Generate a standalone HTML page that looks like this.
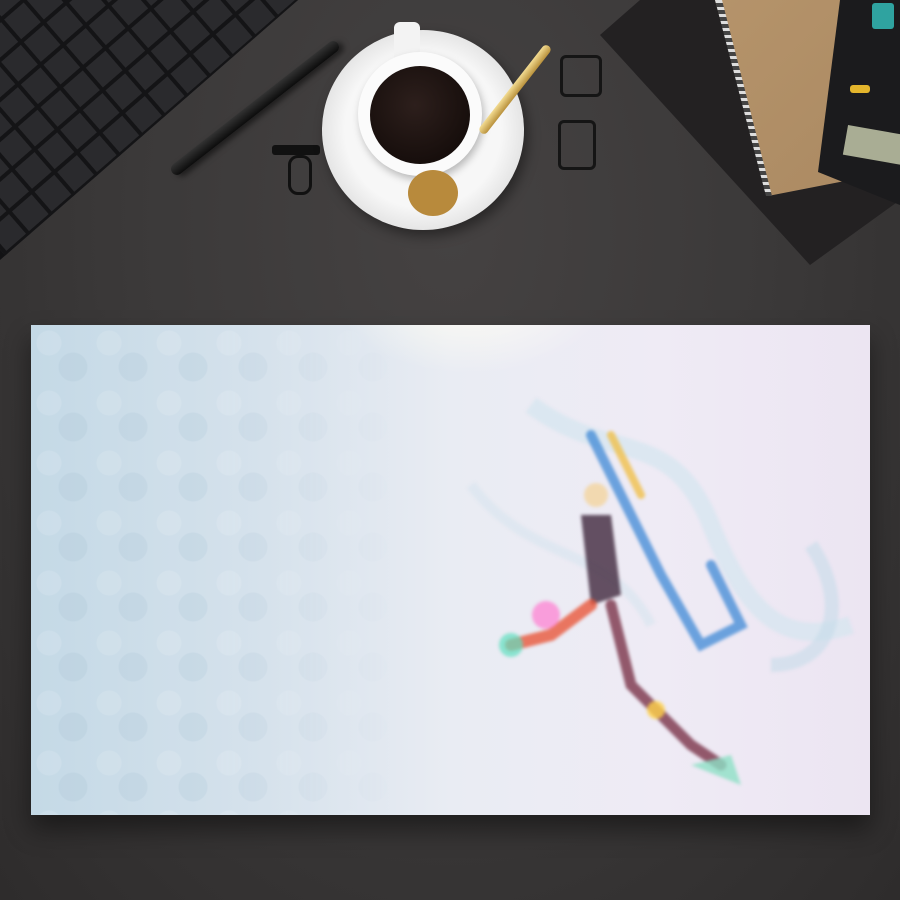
<!DOCTYPE html>
<html><head><meta charset="utf-8"><style>
html,body{margin:0;padding:0}
body{width:900px;height:900px;overflow:hidden;position:relative;
background:radial-gradient(ellipse at 50% 25%,#454242 0%,#3b3939 50%,#2e2c2c 100%);font-family:"Liberation Sans",sans-serif}
.abs{position:absolute}
</style></head><body>
<!-- keyboard -->
<div class="abs" style="left:0;top:0;width:300px;height:262px;clip-path:polygon(0 0,298px 0,0 260px);background:#121214">
  <div style="position:absolute;left:-140px;top:-180px;width:420px;height:380px;transform:rotate(-41deg);
  background-image:linear-gradient(#141416 4px,transparent 4px),linear-gradient(90deg,#141416 4px,transparent 4px);background-size:30px 30px;background-color:#2a2a2d"></div>
</div>
<!-- pen -->
<div class="abs" style="left:150px;top:102px;width:210px;height:12px;background:linear-gradient(#333,#0c0c0c);border-radius:7px;transform:rotate(-38deg);box-shadow:3px 4px 6px rgba(0,0,0,.5)"></div>
<!-- clips -->
<div class="abs" style="left:272px;top:145px;width:48px;height:10px;background:#111;border-radius:3px"></div>
<div class="abs" style="left:288px;top:155px;width:18px;height:34px;border:3px solid #111;border-radius:10px"></div>
<div class="abs" style="left:560px;top:55px;width:36px;height:36px;border:3px solid #151515;border-radius:6px"></div>
<div class="abs" style="left:558px;top:120px;width:32px;height:44px;border:3px solid #151515;border-radius:6px"></div>
<!-- saucer & cup -->
<div class="abs" style="left:322px;top:30px;width:202px;height:200px;border-radius:50%;background:radial-gradient(circle,#f7f7f7 55%,#e6e6e6 70%,#fafafa 100%);box-shadow:4px 6px 12px rgba(0,0,0,.4)"></div>
<div class="abs" style="left:394px;top:22px;width:26px;height:40px;background:#f3f3f3;border-radius:6px"></div>
<div class="abs" style="left:358px;top:52px;width:124px;height:124px;border-radius:50%;background:#fbfbfb;box-shadow:2px 4px 8px rgba(0,0,0,.25)"></div>
<div class="abs" style="left:370px;top:66px;width:100px;height:98px;border-radius:50%;background:radial-gradient(circle at 45% 40%,#2d1f1c,#140c0a 80%)"></div>
<div class="abs" style="left:408px;top:170px;width:50px;height:46px;border-radius:50%;background:#b88a3c"></div>
<div class="abs" style="left:460px;top:85px;width:110px;height:9px;background:linear-gradient(#f3dc92,#b9913c);border-radius:5px;transform:rotate(-52deg)"></div>
<!-- notebooks -->
<div class="abs" style="left:0;top:0;width:900px;height:280px;background:#232122;clip-path:polygon(600px 35px,640px 0,900px 0,900px 200px,810px 265px)"></div>
<div class="abs" style="left:0;top:0;width:900px;height:280px;background:linear-gradient(135deg,#c9a67a,#a88760);clip-path:polygon(715px 0,865px 0,850px 180px,768px 196px)"></div>
<div class="abs" style="left:0;top:0;width:900px;height:280px;clip-path:polygon(715px 0,722px 0,772px 196px,766px 196px);background:repeating-linear-gradient(#ddd 0 3px,#444 3px 7px)"></div>
<!-- calculator -->
<div class="abs" style="left:0;top:0;width:900px;height:280px;background:#1b1b1d;clip-path:polygon(840px 0,900px 0,900px 205px,818px 172px)"></div>
<div class="abs" style="left:872px;top:3px;width:22px;height:26px;background:#2fa3a0;border-radius:3px"></div>
<div class="abs" style="left:850px;top:85px;width:20px;height:8px;background:#e3b52c;border-radius:3px"></div>
<div class="abs" style="left:845px;top:130px;width:60px;height:30px;background:#a9ad94;transform:rotate(10deg)"></div>
<!-- mat -->
<div class="abs" style="left:31px;top:325px;width:839px;height:490px;overflow:hidden;box-shadow:0 14px 24px rgba(0,0,0,.45);
background:linear-gradient(90deg,#c4d9e6 0%,#d6e2ec 28%,#e9ecf3 50%,#efebf5 75%,#ece5f2 100%)">
  <div class="abs" style="left:300px;top:-120px;width:280px;height:170px;border-radius:50%;background:radial-gradient(#fffdf3,rgba(255,255,255,0) 70%)"></div>
  <div class="abs" style="left:0;top:0;width:380px;height:490px;opacity:.12;-webkit-mask-image:linear-gradient(90deg,#000 50%,transparent);
  background-image:radial-gradient(circle at 30% 30%,#fff 12px,transparent 13px),radial-gradient(circle at 70% 70%,#8fb0c6 14px,transparent 15px);background-size:60px 60px"></div>
  <svg class="abs" style="left:380px;top:40px;filter:blur(1.5px)" width="460" height="450" viewBox="0 0 460 450">
    <path d="M120 40 C200 100 260 60 300 160 S380 280 440 260" stroke="#d4e5ef" stroke-width="18" fill="none" opacity=".7"/>
    <path d="M60 120 C120 200 200 180 240 260" stroke="#dae6f0" stroke-width="10" fill="none" opacity=".7"/>
    <path d="M400 180 C440 240 420 300 360 300" stroke="#c6dce9" stroke-width="14" fill="none" opacity=".6"/>
    <path d="M180 70 L250 210 L290 280 L330 260 L300 200" stroke="#3d88d6" stroke-width="10" fill="none" stroke-linecap="round" opacity=".75"/>
    <path d="M200 70 L230 130" stroke="#f0c04a" stroke-width="8" stroke-linecap="round" opacity=".8"/>
    <circle cx="185" cy="130" r="12" fill="#f2d9b0"/>
    <path d="M170 150 L200 150 L210 230 L180 240 Z" fill="#4a3448" opacity=".85"/>
    <path d="M180 240 L140 270 L100 280" stroke="#e8583b" stroke-width="12" fill="none" stroke-linecap="round" opacity=".8"/>
    <path d="M200 240 L220 320 L280 380 L310 400" stroke="#7a3348" stroke-width="11" fill="none" stroke-linecap="round" opacity=".8"/>
    <circle cx="135" cy="250" r="14" fill="#ff7cd0" opacity=".7"/>
    <circle cx="100" cy="280" r="12" fill="#5fe0c0" opacity=".7"/>
    <circle cx="245" cy="345" r="9" fill="#ffd24a" opacity=".8"/>
    <path d="M280 400 L330 420 L320 390 Z" fill="#8de0c6" opacity=".8"/>
  </svg>
</div>
</body></html>
